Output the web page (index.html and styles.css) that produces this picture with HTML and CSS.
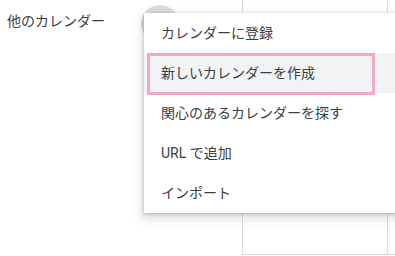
FILE: index.html
```html
<!DOCTYPE html>
<html lang="ja">
<head>
    <meta charset="UTF-8">
    <title>他のカレンダー</title>
    <link rel="stylesheet" href="styles.css">
</head>
<body>
    <div class="page">
        <div class="sidebar">
            <div class="section-head">
                <span class="section-title">他のカレンダー</span>
                <span class="add-btn"></span>
            </div>
        </div>
        <div class="grid">
            <div class="cell"></div>
            <div class="cell last"></div>
        </div>
    </div>

    <ul class="menu">
        <li class="menu-item">カレンダーに登録</li>
        <li class="menu-item active">新しいカレンダーを作成<span class="mark"></span></li>
        <li class="menu-item">関心のあるカレンダーを探す</li>
        <li class="menu-item">URL で追加</li>
        <li class="menu-item">インポート</li>
    </ul>
</body>
</html>
```

FILE: styles.css
```css
body {
    margin: 0;
    font-family: Roboto, "Noto Sans CJK JP", sans-serif;
    color: #3c4043;
    background: #fff;
    overflow: hidden;
}
.page {
    display: flex;
    height: 256px;
}
.sidebar {
    width: 242px;
    flex-shrink: 0;
}
.section-head {
    display: flex;
    align-items: flex-start;
    padding: 7px 0 0 7px;
}
.section-title {
    font-size: 14px;
    line-height: 28px;
    width: 134px;
}
.add-btn {
    width: 38px;
    height: 38px;
    margin-top: -2px;
    border-radius: 50%;
    background: #dadce0;
}
.grid {
    display: flex;
    flex: 1;
}
.cell {
    width: 144px;
    height: 254px;
    border-left: 1px solid #dadce0;
    border-bottom: 1px solid #dadce0;
    flex-shrink: 0;
}
.cell.last {
    width: 20px;
}
.menu {
    position: absolute;
    left: 144px;
    top: 13px;
    width: 270px;
    margin: 0;
    padding: 0;
    list-style: none;
    background: #fff;
    box-shadow: 0 4px 8px 3px rgba(60, 64, 67, 0.15), 0 1px 3px rgba(60, 64, 67, 0.3);
}
.menu-item {
    position: relative;
    height: 40px;
    line-height: 40px;
    padding-left: 17px;
    font-size: 14px;
    white-space: nowrap;
}
.menu-item.active {
    background: #f1f3f4;
}
.mark {
    position: absolute;
    left: 3px;
    top: 0;
    width: 228px;
    height: 42px;
    box-sizing: border-box;
    border: 3px solid #f2a8c8;
}
```
